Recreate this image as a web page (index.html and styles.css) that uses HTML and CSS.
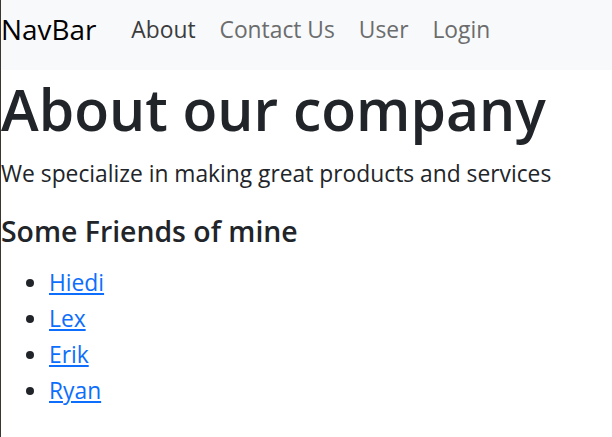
FILE: index.html
```html
<!DOCTYPE html>
<html lang="en">
<head>
<meta charset="utf-8">
<title>About</title>
<link rel="stylesheet" href="styles.css">
</head>
<body>
<nav class="navbar">
  <a class="brand" href="#">NavBar</a>
  <ul class="nav-links">
    <li><a class="nav-link active" href="#">About</a></li>
    <li><a class="nav-link" href="#">Contact Us</a></li>
    <li><a class="nav-link" href="#">User</a></li>
    <li><a class="nav-link" href="#">Login</a></li>
  </ul>
</nav>
<main class="content">
  <h1 class="title">About our company</h1>
  <p class="lead">We specialize in making great products and services</p>
  <h2 class="subtitle">Some Friends of mine</h2>
  <ul class="friends">
    <li><a href="#">Hiedi</a></li>
    <li><a href="#">Lex</a></li>
    <li><a href="#">Erik</a></li>
    <li><a href="#">Ryan</a></li>
  </ul>
</main>
</body>
</html>
```
FILE: styles.css
```css
html, body {
  height: 100%;
}
body {
  margin: 0;
  border-left: 1px solid #3a3632;
  box-sizing: border-box;
  font-family: "Open Sans", "Noto Sans", sans-serif;
  font-size: 22.8px;
  line-height: 36px;
  color: #212529;
  background: #fff;
}
.navbar {
  height: 70px;
  box-sizing: border-box;
  padding-top: 10px;
  background: #f8f9fa;
  display: flex;
  align-items: flex-start;
}
.brand {
  font-size: 27.9px;
  line-height: 36px;
  padding-top: 1px;
  color: #000;
  text-decoration: none;
  margin-right: 23px;
}
.nav-links {
  display: flex;
  list-style: none;
  margin: 0;
  padding: 2px 0 0;
}
.nav-link {
  display: block;
  font-size: 22.8px;
  line-height: 36px;
  padding: 0 12px;
  color: #6b6c6d;
  text-decoration: none;
}
.nav-link.active {
  color: #3b3c3d;
}
.title {
  font-size: 57px;
  font-weight: 600;
  line-height: 68px;
  margin: 5px 0 0;
}
.lead {
  margin: 13px 0 0;
}
.subtitle {
  font-size: 28.4px;
  font-weight: 600;
  line-height: 34px;
  margin: 22px 0 0;
}
.friends {
  margin: 17px 0 0;
  padding-left: 48px;
}
.friends a {
  color: #0d6efd;
}
```
